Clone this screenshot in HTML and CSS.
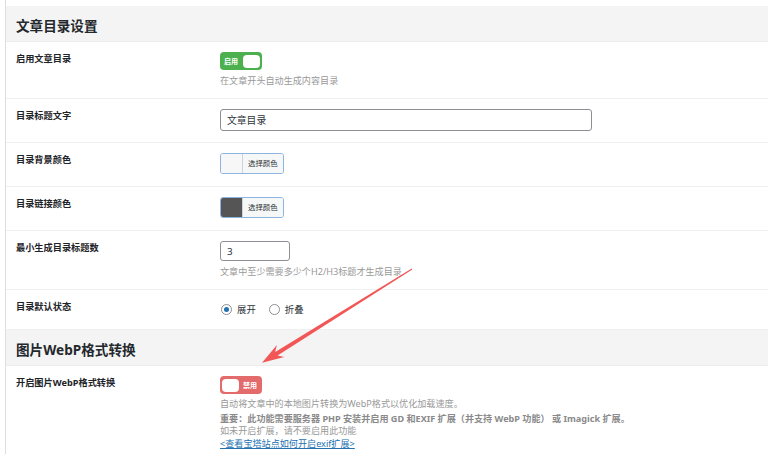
FILE: index.html
```html
<!DOCTYPE html>
<html lang="zh-CN">
<head>
    <meta charset="UTF-8">
    <meta name="viewport" content="width=device-width, initial-scale=1.0">
    <title>文章目录设置</title>
    <link rel="stylesheet" href="styles.css">
</head>
<body>
    <div class="page">
        <h2 class="section-title">文章目录设置</h2>

        <div class="row">
            <div class="row-label">启用文章目录</div>
            <div class="row-field">
                <span class="switch on"><span class="switch-text">启用</span><span class="knob"></span></span>
                <p class="desc">在文章开头自动生成内容目录</p>
            </div>
        </div>

        <div class="row">
            <div class="row-label">目录标题文字</div>
            <div class="row-field">
                <input type="text" class="text-input" value="文章目录">
            </div>
        </div>

        <div class="row">
            <div class="row-label">目录背景颜色</div>
            <div class="row-field">
                <span class="color-result"><span class="swatch swatch-light"></span><span class="color-text">选择颜色</span></span>
            </div>
        </div>

        <div class="row">
            <div class="row-label">目录链接颜色</div>
            <div class="row-field">
                <span class="color-result"><span class="swatch swatch-dark"></span><span class="color-text">选择颜色</span></span>
            </div>
        </div>

        <div class="row">
            <div class="row-label">最小生成目录标题数</div>
            <div class="row-field">
                <input type="text" class="number-input" value="3">
                <p class="desc">文章中至少需要多少个H2/H3标题才生成目录</p>
            </div>
        </div>

        <div class="row">
            <div class="row-label">目录默认状态</div>
            <div class="row-field radios">
                <span class="radio checked"></span><span class="radio-text">展开</span>
                <span class="radio"></span><span class="radio-text">折叠</span>
            </div>
        </div>

        <h2 class="section-title">图片WebP格式转换</h2>

        <div class="row last">
            <div class="row-label">开启图片WebP格式转换</div>
            <div class="row-field">
                <span class="switch off"><span class="knob"></span><span class="switch-text">禁用</span></span>
                <div class="desc-block">
                    <p>自动将文章中的本地图片转换为WebP格式以优化加载速度。</p>
                    <p class="important">重要：此功能需要服务器 PHP 安装并启用 GD 和EXIF 扩展（并支持 WebP 功能） 或 Imagick 扩展。</p>
                    <p>如未开启扩展，请不要启用此功能</p>
                    <a href="#" class="help-link">&lt;查看宝塔站点如何开启exif扩展&gt;</a>
                </div>
            </div>
        </div>
    </div>

    <!-- annotation arrow drawn over the page -->
    <svg class="arrow" width="768" height="454" viewBox="0 0 768 454">
        <polygon fill="#f25757" points="262,362.7 284.3,356.9 277.6,355.4 412.3,269.5 411.7,268.5 275.2,352 276.9,345.1"/>
    </svg>
</body>
</html>
```

FILE: styles.css
```css
* {
    box-sizing: border-box;
}

body {
    margin: 0;
    position: relative;
    background: #ffffff;
    color: #1d2327;
    font-family: "Noto Sans", "Noto Sans CJK SC", sans-serif;
    overflow: hidden;
}

.page {
    margin-left: 5px;
    border-left: 1px solid #dedede;
    padding-top: 6px;
    min-height: 454px;
}

.section-title {
    margin: 0;
    height: 36px;
    padding: 2px 0 0 10px;
    display: flex;
    align-items: center;
    background: #f4f4f4;
    border-bottom: 1px solid #ececec;
    font-size: 13.6px;
    font-weight: bold;
    color: #23282d;
}

.row {
    display: grid;
    grid-template-columns: 204px 1fr;
    padding: 10px 0 11px 10px;
    border-bottom: 1px solid #f0f0f0;
}

.row.last {
    border-bottom: none;
}

.row-label {
    font-size: 9.2px;
    line-height: 13px;
    font-weight: bold;
    color: #1d2327;
}

.row-field {
    min-width: 0;
}

.desc {
    margin: 4px 0 0;
    font-size: 9.1px;
    line-height: 13px;
    color: #999999;
}

/* toggle switch */
.switch {
    display: flex;
    align-items: center;
    width: 42px;
    height: 18px;
    border-radius: 4px;
    padding: 0 2px;
}

.switch.on {
    background: #4cb04f;
    justify-content: space-between;
    padding-left: 4px;
}

.switch.off {
    background: #e46b6b;
    gap: 4px;
}

.switch-text {
    color: #ffffff;
    font-size: 7px;
    font-weight: bold;
    line-height: 1;
}

.knob {
    width: 17px;
    height: 13px;
    border-radius: 4px;
    background: #ffffff;
}

/* inputs */
.text-input,
.number-input {
    display: block;
    height: 22px;
    padding: 0 6px;
    border: 1px solid #8c8f94;
    border-radius: 3px;
    font-family: inherit;
    font-size: 9.8px;
    color: #2c3338;
    background: #ffffff;
}

.text-input {
    width: 372px;
}

.number-input {
    width: 70px;
    height: 20px;
}

/* color picker button */
.color-result {
    display: inline-flex;
    height: 21px;
    border: 1px solid #8db3df;
    border-radius: 3px;
    overflow: hidden;
    vertical-align: top;
}

.swatch {
    width: 22px;
    border-right: 1px solid #c9d4df;
}

.swatch-light {
    background: #f7f7f7;
}

.swatch-dark {
    background: #555555;
}

.color-text {
    padding: 0 5px;
    background: #f6f7f7;
    font-size: 7.4px;
    line-height: 19px;
    color: #2c3338;
}

/* radios */
.radios {
    display: flex;
    align-items: center;
    height: 18px;
}

.radio {
    width: 11px;
    height: 11px;
    border: 1px solid #8c8f94;
    border-radius: 50%;
    display: flex;
    align-items: center;
    justify-content: center;
    margin-left: 1px;
}

.radio.checked::after {
    content: "";
    width: 5px;
    height: 5px;
    border-radius: 50%;
    background: #2271b1;
}

.radio-text {
    margin: 0 12px 0 5px;
    font-size: 9.4px;
    color: #2c3338;
}

/* webp description */
.desc-block {
    margin-top: 4px;
    font-size: 9.1px;
    line-height: 12.5px;
    color: #999999;
}

.desc-block p {
    margin: 0;
}

.desc-block .important {
    margin-top: 2px;
    font-weight: bold;
    color: #8a8a8a;
}

.help-link {
    color: #2271b1;
    text-decoration: underline;
}

.arrow {
    position: absolute;
    top: 0;
    left: 0;
    pointer-events: none;
}
```
